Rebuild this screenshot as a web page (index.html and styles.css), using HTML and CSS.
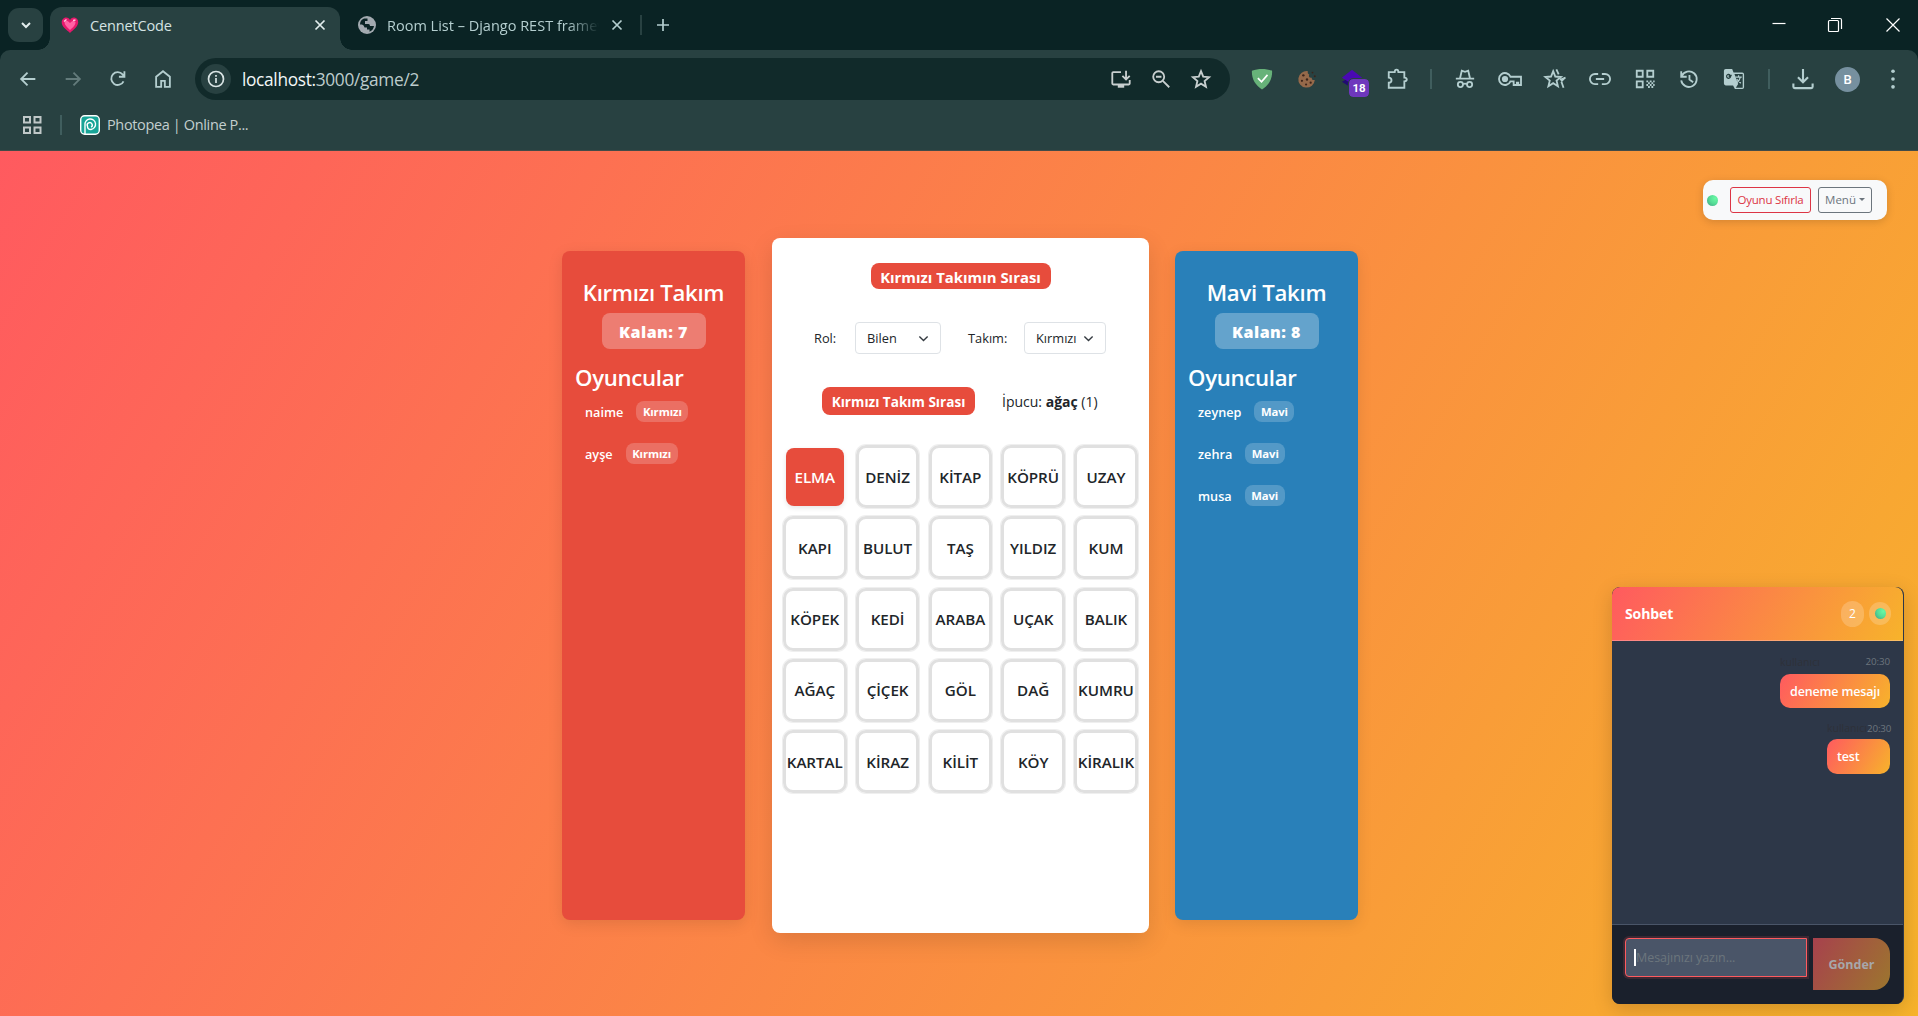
FILE: index.html
```html
<!DOCTYPE html>
<html lang="tr">
<head>
<meta charset="utf-8">
<title>CennetCode</title>
<link rel="stylesheet" href="styles.css">
</head>
<body>
<header class="browser">
  <div class="tabstrip">
    <div class="tab-search"><svg width="12" height="12" viewBox="0 0 12 12" class="ic bold"><path d="M2 4l4 4 4-4"/></svg></div>
    <div class="tab active">
      <svg class="favicon" width="18" height="17" viewBox="0 0 18 17"><path d="M9 16C6 13 .7 10 .7 5.300C.7 2.500 3 .6 5.200 .6C7 .6 8.400 1.700 9 3.200C9.700 1.500 11.300 .4 13.300 .6C15.600 .8 17.400 2.900 17.200 5.600C16.900 10 12 13 9 16Z" fill="#e6186c"/><path d="M9 13C6 10 3.500 8 3.500 5.500C3.500 3.500 7 3 9 6C11 3 15 3.500 14.500 6C14 9 11 11 9 13Z" fill="#ff62a4"/><path d="M3 4.500L5.500 2.500M12 3.500L14.500 3" stroke="#ffc9df" stroke-width="1.500"/></svg>
      <span class="tab-title t-cennet">CennetCode</span>
      <svg class="tab-close ic w17" width="12" height="12" viewBox="0 0 12 12"><path d="M1.500 1.500l9 9M10.500 1.500l-9 9"/></svg>
    </div>
    <div class="tab idle">
      <svg width="18" height="18" viewBox="0 0 18 18"><circle cx="9" cy="9" r="9" fill="#a3aab0"/><path d="M2 8.500Q2 4 6 2.500L9.500 2.500V5H7V8H10.500Q12 8 12 10H16Q15.500 14 11.500 15.700V13.500H9V11.500H6.500Q6 9 4 8.500Z" fill="#0a2324"/></svg>
      <span class="tab-title t-room">Room List – Django REST framework</span>
      <svg class="tab-close ic w17" width="12" height="12" viewBox="0 0 12 12"><path d="M1.500 1.500l9 9M10.500 1.500l-9 9"/></svg>
    </div>
    <i class="tab-sep"></i>
    <svg class="ic w17 plus" width="14" height="14" viewBox="0 0 14 14"><path d="M7 1v12M1 7h12"/></svg>
    <div class="window-controls">
      <svg width="56" height="30" viewBox="-28 -15 56 30"><path d="M-6.500-1.500h13"/></svg>
      <svg width="57" height="30" viewBox="-28 -15 57 30"><rect x="-6.500" y="-4.500" width="10" height="11" rx="1"/><path d="M-4-6.500h9q1.500 0 1.500 1.500v9"/></svg>
      <svg width="54" height="30" viewBox="-29 -15 54 30"><path d="M-6.500-6.500l13 13M6.500-6.500l-13 13"/></svg>
    </div>
  </div>
  <div class="chrome-panel">
    <div class="toolbar">
      <div class="nav">
        <svg class="ic" viewBox="0 0 24 24"><path d="M20 12H4.500M11.500 5l-7 7 7 7"/></svg>
        <svg class="ic dim" viewBox="0 0 24 24"><path d="M4 12h15.500M12.500 5l7 7-7 7"/></svg>
        <svg class="ic" viewBox="0 0 24 24"><path d="M18 14.500a7 7 0 1 1-1-7.500l1.500 2M19 3.500v6h-6"/></svg>
        <svg class="ic" viewBox="0 0 24 24"><path d="M4.500 9.500L12 3.500l7.500 6V20.500h-5.500v-6.500h-4v6.500H4.500z"/></svg>
      </div>
      <div class="address">
        <span class="info"><svg width="18" height="18" viewBox="0 0 18 18" class="ic w17"><circle cx="9" cy="9" r="7.500"/><path d="M9 8v5M9 5v1.700"/></svg></span>
        <span class="url">localhost:<em>3000/game/2</em></span>
        <div class="address-icons">
          <svg class="ic" viewBox="0 0 24 24"><path d="M12 4.500H3.500Q2.500 4.500 2.500 5.500V17q0 1 1 1h17q1 0 1-1v-4M17.500 3v9M13.500 8.500l4 4 4-4"/><path d="M8.500 20h7" stroke-width="3"/></svg>
          <svg class="ic" viewBox="0 0 24 24"><circle cx="9.500" cy="9.500" r="6"/><path d="M14 14l7 7M6.500 9.500h6"/></svg>
          <svg class="ic" viewBox="0 0 24 24"><path d="M12 3.500l2.400 6 6.400.5-4.900 4.200 1.500 6.300-5.400-3.400-5.400 3.400 1.500-6.300L3.200 10l6.400-.5z"/></svg>
        </div>
      </div>
      <div class="extensions">
        <svg viewBox="0 0 24 24"><path d="M1 3C8 .5 16 .5 23 3C23.500 12 19.500 18.500 12 23.500C4.500 18.500 .5 12 1 3Z" fill="#67b279"/><path d="M7.500 11l4 4L18 7.500" fill="none" stroke="#fff" stroke-width="1.800"/></svg>
        <svg viewBox="0 0 24 24"><path d="M13 3.500A9 9 0 1 0 20.500 13C18 13.500 17 12 17.200 10.500C14 11 13.500 8.500 14.500 7C13 6.500 12.500 5 13 3.500Z" fill="#95694a"/><g fill="#3b241b"><circle cx="8" cy="8" r="1.300"/><circle cx="6.500" cy="14" r="1.200"/><circle cx="12" cy="12.500" r="1.300"/><circle cx="11" cy="18" r="1.200"/><circle cx="16" cy="16" r="1.200"/><circle cx="18" cy="5" r="1"/><circle cx="20.500" cy="9" r="1"/></g></svg>
        <span class="stack"><svg viewBox="0 0 24 24"><path d="M1 15l11-6 11 6-11 7z" fill="#210b72"/><path d="M1 10.500L12 2l11 8.500-11 7z" fill="#4a09b4"/></svg><b>18</b></span>
        <svg class="ic" viewBox="0 0 24 24"><path d="M3 4.500h6.500q0-2.700 2-2.700t2 2.700H20v6q2.700.3 2.700 2t-2.700 2V21.500H3v-5.500q3 0 3-2.700T3 10.500z"/></svg>
      </div>
      <i class="tool-sep"></i>
      <div class="pins">
        <svg class="ic" viewBox="0 0 24 24"><path d="M2 11.500h20M6.500 11.500L8.500 3l3.500 1.200L15.500 3l2 8.500"/><circle cx="7" cy="18" r="2.800"/><circle cx="17" cy="18" r="2.800"/><path d="M9.800 17.500q2.200-1 4.400 0"/></svg>
        <svg class="ic wide" viewBox="0 0 28 24"><path d="M14.500 9.500a6.500 6.500 0 1 0 0 5H18v4h3.500v-2.500h1.500v2.500h3V9.500z"/><circle cx="8.500" cy="12" r="2.400" fill="#b4cecf"/></svg>
        <svg class="ic wide" viewBox="0 0 28 24"><path d="M12 3.500l2.300 5.800 6.200.5-4.800 4 1.500 6.200-5.200-3.400L6.800 20l1.500-6.200-4.800-4 6.200-.5zM15.500 1.500l2.500 5.500M19.500 12.800L25.500 10.500M21 15l2.300 6.500M25 10.500l-4.200 4"/></svg>
        <svg class="ic wide" viewBox="0 0 28 24"><path d="M12 6.500H8.500a5.500 5.500 0 0 0 0 11H12M16 6.500h3.500a5.500 5.500 0 0 1 0 11H16M9.500 12h9"/></svg>
        <svg class="ic" viewBox="0 0 24 24"><path d="M3 3h6.500v6.500H3zM14.500 3H21v6.500h-6.500zM3 14.500h6.500V21H3z"/><path d="M13.500 14.500h9M13.500 18.500h9" stroke-dasharray="2 1.700"/><path d="M15.300 16.500h7M15.300 20.700h7" stroke-dasharray="2 1.700"/></svg>
        <svg class="ic" viewBox="0 0 24 24"><path d="M4 9a8.500 8.500 0 1 1-.5 4.500M3.500 3.500V9.500h6M12.500 7.500v5l4 3"/></svg>
        <svg viewBox="0 0 24 24"><path d="M2 1h8l1.500 4H21q2 0 2 2v14q0 2-2 2h-8l-2-4H3q-2 0-2-2V3q0-2 2-2z" fill="#b4cecf"/><path d="M12.500 6.500H21.500V21.500H14l2.500-4z" fill="#284141"/><path d="M9.500 8H6.800v1.500h1.500A2.200 2.200 0 1 1 7.500 7.300" fill="none" stroke="#284141" stroke-width="1.300"/><path d="M13.500 10h7M17 8v2M19 10q-1 4-4 6M15 12q2 3 4.500 4.500" fill="none" stroke="#b4cecf" stroke-width="1.300"/></svg>
      </div>
      <i class="tool-sep"></i>
      <div class="end-tools">
        <svg class="ic" viewBox="0 0 24 24"><path d="M12 1v14M6.500 10l5.500 5.500 5.500-5.500M1.500 17v3.500q0 1.500 1.500 1.500h18q1.500 0 1.500-1.500V17" stroke-width="2.300"/></svg>
        <span class="profile"><b>B</b></span>
        <svg viewBox="0 0 24 24" fill="#b4cecf"><circle cx="12" cy="3.500" r="2"/><circle cx="12" cy="12" r="2"/><circle cx="12" cy="20.500" r="2"/></svg>
      </div>
    </div>
    <div class="bookmarks">
      <svg class="ic" width="20" height="20" viewBox="0 0 20 20"><path d="M2 2h6v5.500H2zM12.500 2h6v5.500h-6zM2 12.500h6V18H2zM12.500 12.500h6V18h-6z"/></svg>
      <i class="bm-sep"></i>
      <svg width="20" height="20" viewBox="0 0 20 20"><rect x=".7" y=".7" width="18.600" height="18.600" rx="4" fill="#18a497" stroke="#fff" stroke-width="1.400"/><path d="M5 19V10a5.300 5.300 0 1 1 6 4.500q-3.500 0-3.500-3.300a2.500 2.500 0 1 1 3.600 1" fill="none" stroke="#fff" stroke-width="1.400"/></svg>
      <span class="bm-text">Photopea | Online P...</span>
    </div>
  </div>
</header>
<main class="page">
  <section class="team red">
    <h2 class="team-title t-kt">Kırmızı Takım</h2>
    <div class="remaining">Kalan: 7</div>
    <h2 class="players-title">Oyuncular</h2>
    <ul class="players">
      <li><span>naime</span><b>Kırmızı</b></li>
      <li><span>ayşe</span><b>Kırmızı</b></li>
    </ul>
  </section>
  <section class="board">
    <div class="turn">Kırmızı Takımın Sırası</div>
    <div class="controls">
      <label class="l-rol">Rol:</label>
      <div class="select s-rol"><span>Bilen</span><svg width="11" height="11" viewBox="0 0 16 16"><path d="M2 5l6 6 6-6"/></svg></div>
      <label class="l-takim">Takım:</label>
      <div class="select s-takim"><span>Kırmızı</span><svg width="11" height="11" viewBox="0 0 16 16"><path d="M2 5l6 6 6-6"/></svg></div>
    </div>
    <div class="clue"><div class="clue-turn">Kırmızı Takım Sırası</div><div class="clue-text">İpucu: <b>ağaç</b> (1)</div></div>
    <div class="cards">
      <div class="card open">ELMA</div><div class="card">DENİZ</div><div class="card">KİTAP</div><div class="card">KÖPRÜ</div><div class="card">UZAY</div>
      <div class="card">KAPI</div><div class="card">BULUT</div><div class="card">TAŞ</div><div class="card">YILDIZ</div><div class="card">KUM</div>
      <div class="card">KÖPEK</div><div class="card">KEDİ</div><div class="card">ARABA</div><div class="card">UÇAK</div><div class="card">BALIK</div>
      <div class="card">AĞAÇ</div><div class="card">ÇİÇEK</div><div class="card">GÖL</div><div class="card">DAĞ</div><div class="card">KUMRU</div>
      <div class="card">KARTAL</div><div class="card">KİRAZ</div><div class="card">KİLİT</div><div class="card">KÖY</div><div class="card">KİRALIK</div>
    </div>
  </section>
  <section class="team blue">
    <h2 class="team-title t-mt">Mavi Takım</h2>
    <div class="remaining">Kalan: 8</div>
    <h2 class="players-title">Oyuncular</h2>
    <ul class="players">
      <li><span>zeynep</span><b>Mavi</b></li>
      <li><span>zehra</span><b>Mavi</b></li>
      <li><span>musa</span><b>Mavi</b></li>
    </ul>
  </section>
  <nav class="game-menu">
    <i class="dot"></i>
    <button class="btn reset">Oyunu Sıfırla</button>
    <button class="btn menu">Menü<i class="caret"></i></button>
  </nav>
  <aside class="chat">
    <div class="chat-head"><h3>Sohbet</h3><span class="count">2</span><span class="status"><i class="dot"></i></span></div>
    <div class="messages">
      <div class="msg m1"><div class="meta"><span>kullanıcı</span><time>20:30</time></div><div class="bubble">deneme mesajı</div></div>
      <div class="msg m2"><div class="meta"><span>kullanıcı</span><time>20:30</time></div><div class="bubble">test</div></div>
    </div>
    <div class="composer"><div class="input"><i class="cursor"></i><span>Mesajınızı yazın...</span></div><button class="send">Gönder</button></div>
  </aside>
</main>
</body>
</html>
```
FILE: styles.css
```css
* { box-sizing: border-box; }
body {
  margin: 0; width: 1918px; height: 1016px; overflow: hidden;
  font-family: "Open Sans", "Noto Sans", sans-serif; font-stretch: 92%;
  color: #212529; white-space: nowrap;
}
i, em { font-style: normal; }
b { font-weight: 700; }
h2, h3, ul { margin: 0; padding: 0; list-style: none; }
button { font: inherit; padding: 0; margin: 0; letter-spacing: inherit; }
.ic { fill: none; stroke: #b4cecf; stroke-width: 2; }
.ic.w17 { stroke-width: 1.7; }
.ic.dim { stroke: #637b7b; }

/* browser frame */
.browser { height: 151px; background: #0a2324; color: #d5e3e3; }
.tabstrip { height: 50px; display: flex; align-items: center; padding-left: 8px; }
.tab-search { width: 35px; height: 34px; border-radius: 11px; background: #284141; display: flex; align-items: center; justify-content: center; margin-right: 7px; }
.tab-search .ic, .active .tab-close { stroke: #e2eded; }
.tab { display: flex; align-items: center; height: 43px; }
.tab.active { align-self: flex-end; position: relative; width: 290px; padding: 0 14px 7px 11px; background: #284141; border-radius: 12px 12px 0 0; }
.tab.active::before, .tab.active::after { content: ""; position: absolute; bottom: 0; width: 12px; height: 12px; }
.tab.active::before { left: -12px; background: radial-gradient(circle at 0 0, transparent 11.5px, #284141 12px); }
.tab.active::after { right: -12px; background: radial-gradient(circle at 100% 0, transparent 11.5px, #284141 12px); }
.tab-title { font-size: 14.5px; line-height: 20px; margin-left: 11px; padding-top: 1px; letter-spacing: -.15px; }
.tab-close { margin-left: auto; }
.tab.idle { width: 265px; margin-left: 18px; }
.t-room { width: 212px; overflow: hidden; color: #b4cecf; letter-spacing: 0; -webkit-mask-image: linear-gradient(90deg, #000 85%, transparent); mask-image: linear-gradient(90deg, #000 85%, transparent); }
.tab-sep { width: 2px; height: 20px; background: #284141; margin: 0 14px 0 17px; }
.window-controls { display: flex; margin-left: auto; }
.window-controls svg { fill: none; stroke: #fff; stroke-width: 1.2; }
.chrome-panel { height: 101px; background: #284141; border-radius: 10px 10px 0 0; border-bottom: 1px solid #434b48; }
.toolbar { height: 58px; display: flex; align-items: center; }
.nav { display: flex; padding-left: 5px; width: 195px; }
.nav svg { width: 22px; height: 22px; margin: 0 11.6px; }
.address { width: 1035px; height: 42px; border-radius: 21px; background: #112a2a; display: flex; align-items: center; padding: 0 9px 0 6px; }
.info { width: 30px; height: 30px; border-radius: 50%; background: #284141; display: flex; align-items: center; justify-content: center; }
.info .ic { stroke: #d9e4e4; }
.url { margin-left: 11px; font-size: 17.3px; letter-spacing: -.32px; color: #f3f8f8; padding-top: 1px; }
.url em { color: #bdcccc; }
.address-icons { display: flex; margin-left: auto; }
.address-icons svg { width: 22px; height: 22px; margin: 0 9px; stroke: #c8cfcf; }
.extensions { display: flex; padding-left: 9px; width: 200px; }
.extensions svg { width: 22px; height: 22px; margin: 0 11.5px; flex: none; }
.stack { position: relative; height: 22px; }
.stack b { position: absolute; left: 20px; top: 11px; width: 20px; height: 18px; border-radius: 4px; background: #6e37bd; color: #fff; font: bold 11.5px/19px Roboto, sans-serif; text-align: center; outline: 1px solid #284141; }
.tool-sep { width: 2px; height: 20px; background: #405e5e; }
.pins { display: flex; padding-left: 11px; width: 336px; }
.pins svg { width: 22px; height: 22px; margin: 0 11.4px; flex: none; }
.pins svg.wide { width: 26px; margin: 0 9.4px; }
.end-tools { display: flex; align-items: center; padding-left: 10px; }
.end-tools svg { width: 22px; height: 22px; margin: 0 11.5px; }
.profile { width: 45px; display: flex; justify-content: center; }
.profile b { width: 25px; height: 25px; border-radius: 50%; background: #76909f; color: #fff; font: 500 13px/25px Roboto, sans-serif; text-align: center; }
.bookmarks { display: flex; align-items: center; height: 34px; padding-left: 22px; font-size: 14.5px; color: #c3cfcf; }
.bookmarks .ic { stroke: #c0c8c8; }
.bm-sep { width: 2px; height: 20px; background: #405e5e; margin: 0 18px 0 18px; }
.bm-text { margin-left: 7px; letter-spacing: -.36px; padding-bottom: 1px; }

/* game */
.page { height: 865px; display: flex; justify-content: center; align-items: flex-start; gap: 26px; padding-top: 87px; padding-left: 2px; background: linear-gradient(120deg, #ff5a5f, #f7b32b); position: relative; }
.team { width: 183px; height: 669px; margin-top: 13px; border-radius: 8px; color: #fff; padding: 28px 13px 0; box-shadow: 0 4px 15px rgba(0,0,0,.1); }
.red { background: #e74c3c; margin-right: 1px; }
.blue { background: #2980b9; }
.team-title, .players-title { font-weight: 600; font-size: 22.2px; line-height: 27px; letter-spacing: -.3px; }
.team-title { display: flex; justify-content: center; }
.remaining { width: 104px; height: 36px; margin: 7px auto 15px; border-radius: 8px; background: rgba(255,255,255,.28); font: 800 16px/38px "Open Sans", sans-serif; font-stretch: 95%; text-align: center; letter-spacing: .5px; }
.players { display: grid; gap: 21px; padding: 10px 0 0 10px; font-size: 12.7px; font-weight: 600; }
.players li { display: flex; align-items: center; height: 21px; gap: 13px; }
.players b { font-size: 11.3px; line-height: 21px; padding: 0 6.500px; background: rgba(255,255,255,.2); border-radius: 8px; letter-spacing: -.1px; }
.board { width: 377px; height: 695px; border-radius: 8px; background: #fff; box-shadow: 0 8px 25px rgba(0,0,0,.12); padding: 25px 11px 0; }
.turn, .clue-turn { background: #e74c3c; color: #fff; font-weight: 700; text-align: center; border-radius: 8px; }
.turn { width: 180px; height: 26px; margin: 0 auto; font-size: 14.9px; line-height: 28px; }
.controls { display: flex; align-items: center; margin-top: 33px; padding-left: 31px; font-size: 12.8px; height: 32px; }
.l-rol { width: 41px; }
.l-takim { width: 56px; margin-left: 27px; }
.select { height: 32px; border: 1px solid #dee2e6; border-radius: 4px; display: flex; align-items: center; justify-content: space-between; padding: 0 11px 0 11px; }
.select svg { fill: none; stroke: #343a40; stroke-width: 2; }
.s-rol { width: 86px; }
.s-takim { width: 82px; }
.clue { display: flex; align-items: center; margin-top: 33px; height: 28px; padding-left: 39px; }
.clue-turn { width: 153px; height: 28px; font-size: 13.6px; line-height: 29px; }
.clue-text { margin-left: 27px; font-size: 14px; }
.cards { display: grid; grid-template-columns: repeat(5, 63.5px); grid-auto-rows: 63.2px; column-gap: 9.3px; row-gap: 8.1px; margin-top: 30px; }
.card { border: 3px solid #e0e0e0; border-radius: 10px; box-shadow: 0 0 0 1px rgba(224,224,224,.5); display: flex; align-items: center; justify-content: center; font-weight: 600; font-size: 15.2px; letter-spacing: -.05px; }
.card.open { margin: 2.5px; border: 0; border-radius: 8px; background: #e74c3c; color: #fff; box-shadow: 0 2px 5px rgba(0,0,0,.1); }

/* floating game menu */
.game-menu { position: absolute; left: 1703px; top: 29px; width: 184px; height: 40px; border-radius: 10px; background: #f8f9fa; display: flex; align-items: center; padding-left: 4px; font-size: 11.5px; box-shadow: 0 2px 8px rgba(0,0,0,.15); }
.dot { width: 11px; height: 11px; border-radius: 50%; background: radial-gradient(circle at 75% 30%, #69f9a4, #55db96 50%, #3f9d84); }
.btn { height: 26px; border: 1px solid; border-radius: 3px; background: #f8f9fa; display: flex; align-items: center; justify-content: center; padding-bottom: 1px; }
.reset { width: 81px; margin-left: 12px; color: #dc3545; letter-spacing: -.22px; }
.menu { width: 54px; margin-left: 7px; color: #6c757d; }
.caret { border: 3px solid transparent; border-top-color: #6c757d; border-bottom: 0; margin-left: 3px; }

/* chat */
.chat { position: absolute; left: 1612px; top: 436px; width: 292px; height: 417px; border-radius: 8px; overflow: hidden; background: #2d3748; border-right: 1px solid #2d3748; box-shadow: 0 5px 20px rgba(0,0,0,.16); display: flex; flex-direction: column; }
.chat-head { height: 54px; background: linear-gradient(120deg, #ff5a5f, #f7b32b); border-bottom: 1px solid rgba(255,255,255,.25); border-radius: 8px 8px 0 0; color: #fff; display: flex; align-items: center; padding: 0 12px 0 13px; }
.chat-head h3 { font-size: 14px; font-weight: 700; letter-spacing: -.1px; margin-right: auto; }
.count, .status { background: rgba(255,255,255,.2); display: flex; align-items: center; justify-content: center; }
.count { width: 23px; height: 26px; border-radius: 12px; font-size: 12px; margin-right: 5px; }
.status { width: 22px; height: 23px; border-radius: 12px; }
.messages { height: 283px; padding: 13px 13px 0; display: flex; flex-direction: column; align-items: flex-end; gap: 13px; }
.meta { display: flex; justify-content: space-between; height: 20px; font-size: 10.5px; line-height: 17px; color: #2d3139; }
.meta time { font-size: 9.8px; color: #6c757d; line-height: 16px; letter-spacing: -.1px; }
.bubble { background: linear-gradient(120deg, #ff5a5f, #f7b32b); color: #fff; border-radius: 10px; padding-left: 10px; font-weight: 600; font-size: 12.5px; letter-spacing: -.15px; height: 34px; line-height: 35px; }
.m1 { width: 110px; }
.m2 { width: 63px; }
.m2 .meta { height: 18px; }
.m2 .meta, .m2 .meta time { line-height: 15px; }
.m2 .bubble { height: 35px; }
.composer { flex: 1; background: #1a202c; border-top: 1px solid #4a5568; display: flex; align-items: flex-start; padding: 13px; gap: 6px; }
.input { width: 182px; height: 39px; background: #4a5568; border: 1px solid #ff5a5f; border-radius: 4px 0 0 4px; box-shadow: 0 0 0 2px rgba(255,90,95,.15); display: flex; align-items: center; padding-left: 8px; color: #6c757d; font-size: 12.5px; letter-spacing: -.05px; }
.cursor { width: 2px; height: 17px; background: #fff; }
.send { width: 77px; height: 52px; border: 0; border-radius: 0 16px 16px 0; background: linear-gradient(120deg, #a7414d, #9c762e); color: #a7a7aa; font-weight: 700; font-size: 12.5px; }
```
